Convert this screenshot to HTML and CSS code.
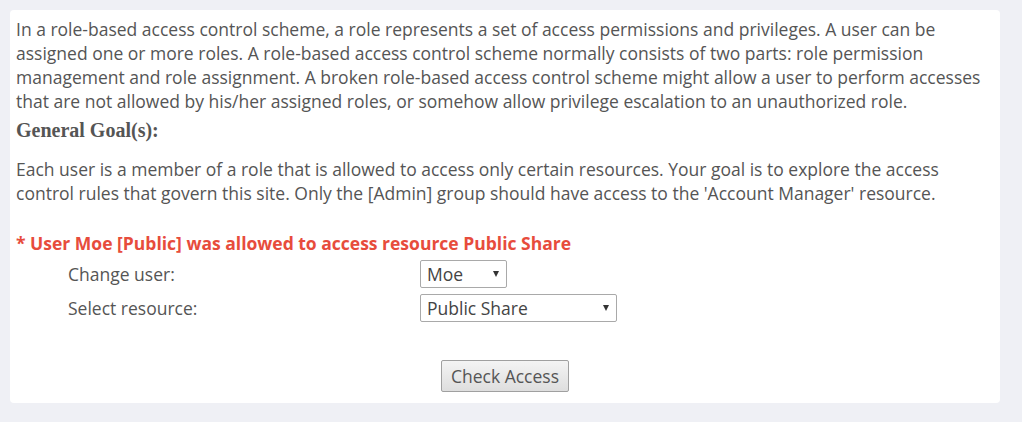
FILE: index.html
```html
<!DOCTYPE html>
<html>
<head>
<meta charset="utf-8">
<link rel="stylesheet" href="styles.css">
</head>
<body>
<div class="card">
  <p class="intro">In a role-based access control scheme, a role represents a set of access permissions and privileges. A user can be assigned one or more roles. A role-based access control scheme normally consists of two parts: role permission management and role assignment. A broken role-based access control scheme might allow a user to perform accesses that are not allowed by his/her assigned roles, or somehow allow privilege escalation to an unauthorized role.</p>
  <h3 class="goal-title">General Goal(s):</h3>
  <p class="goal">Each user is a member of a role that is allowed to access only certain resources. Your goal is to explore the access control rules that govern this site. Only the [Admin] group should have access to the 'Account Manager' resource.</p>
  <p class="result">* User Moe [Public] was allowed to access resource Public Share</p>
  <div class="form">
    <div class="row">
      <span class="label">Change user:</span>
      <span class="select select-user"><span class="value">Moe</span></span>
    </div>
    <div class="row">
      <span class="label">Select resource:</span>
      <span class="select select-res"><span class="value">Public Share</span></span>
    </div>
  </div>
  <div class="actions">
    <button class="btn" type="button">Check Access</button>
  </div>
</div>
</body>
</html>
```

FILE: styles.css
```css
html, body {
  margin: 0;
  padding: 0;
}
body {
  background: #eff0f5;
  font-family: "Open Sans", "Liberation Sans", sans-serif;
  font-size: 17.5px;
  color: #555555;
}
.card {
  margin: 10px;
  width: 978px;
  padding: 7px 6px 7px 6px;
  background: #ffffff;
  border-radius: 4px;
}
.intro {
  margin: 0;
  line-height: 24px;
}
.goal-title {
  margin: 5px 0 0 0;
  font-family: "Liberation Serif", "Times New Roman", serif;
  font-weight: bold;
  font-size: 20px;
  line-height: 24px;
  color: #555555;
}
.goal {
  margin: 15px 0 0 0;
  line-height: 24px;
}
.result {
  margin: 26px 0 0 0;
  line-height: 24px;
  font-weight: bold;
  color: #e74c3c;
}
.form {
  margin-top: 5px;
  padding-left: 52px;
  display: flex;
  flex-direction: column;
  gap: 6px;
}
.row {
  display: flex;
  align-items: center;
  height: 28px;
}
.label {
  width: 352px;
  line-height: 24px;
}
.select {
  position: relative;
  box-sizing: border-box;
  height: 28px;
  border: 1px solid #a9a9a9;
  border-radius: 2px;
  background: #ffffff;
  display: flex;
  align-items: center;
  padding-left: 6px;
  font-size: 17.5px;
  color: #444444;
}
.select::after {
  content: "";
  position: absolute;
  right: 7px;
  top: 10px;
  border-left: 3.5px solid transparent;
  border-right: 3.5px solid transparent;
  border-top: 6px solid #333333;
}
.select-user {
  width: 87px;
}
.select-res {
  width: 197px;
}
.actions {
  margin-top: 38px;
  display: flex;
  justify-content: center;
  margin-bottom: 4px;
}
.btn {
  box-sizing: border-box;
  width: 128px;
  height: 32px;
  font-family: "Open Sans", "Liberation Sans", sans-serif;
  font-size: 17.5px;
  color: #555555;
  background: linear-gradient(#f4f4f4, #dedede);
  border: 1px solid #a0a0a0;
  border-radius: 2px;
  padding: 0;
}
```
